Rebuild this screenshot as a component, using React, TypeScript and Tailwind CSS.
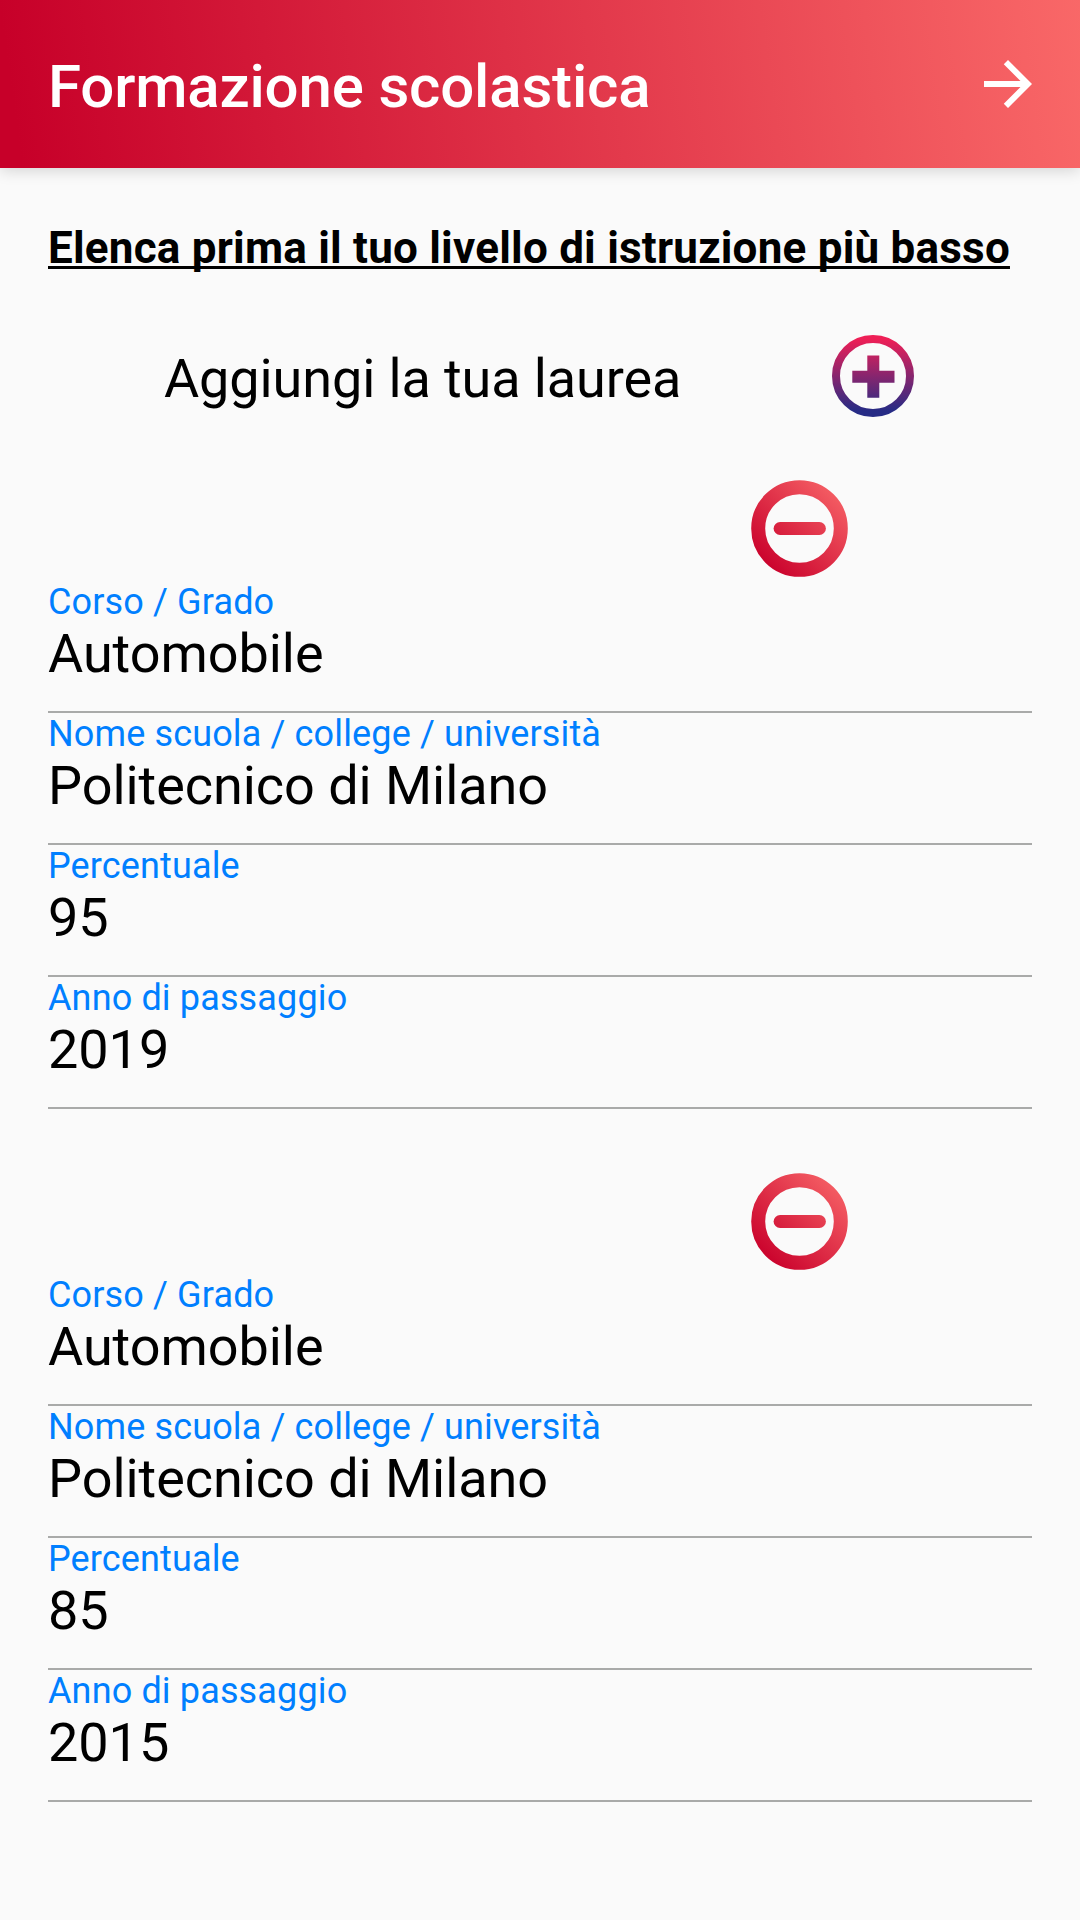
type Entry = { course: string; school: string; percentage: string; year: string };

const entries: Entry[] = [
  { course: "Automobile", school: "Politecnico di Milano", percentage: "95", year: "2019" },
  { course: "Automobile", school: "Politecnico di Milano", percentage: "85", year: "2015" },
];

function ArrowIcon() {
  return (
    <svg viewBox="4 4 16 16" className="size-12 fill-white">
      <path d="M12 4l-1.41 1.41L16.17 11H4v2h12.17l-5.58 5.59L12 20l8-8z" />
    </svg>
  );
}

function PlusIcon() {
  return (
    <svg viewBox="0 0 82 82" className="size-[82px]">
      <defs>
        <linearGradient id="plus" gradientUnits="userSpaceOnUse" x1="0" y1="4" x2="0" y2="76">
          <stop offset="0" stopColor="#ee1f56" />
          <stop offset="1" stopColor="#262b85" />
        </linearGradient>
      </defs>
      <circle cx="41" cy="41" r="37" fill="none" stroke="url(#plus)" strokeWidth="8" />
      <path d="M35.3 20.5h12v15.2h15.2v12h-15.2v15h-12v-15h-15v-12h15z" fill="url(#plus)" />
    </svg>
  );
}

function MinusIcon() {
  return (
    <svg viewBox="0 0 97 97" className="size-[97px]">
      <defs>
        <linearGradient id="minus" gradientUnits="userSpaceOnUse" x1="14" y1="88" x2="92" y2="7">
          <stop offset="0" stopColor="#c9002b" />
          <stop offset="1" stopColor="#f86568" />
        </linearGradient>
      </defs>
      <circle cx="48.5" cy="48.5" r="41.3" fill="none" stroke="url(#minus)" strokeWidth="14" />
      <rect x="22.6" y="42" width="52.3" height="13" rx="6.5" fill="url(#minus)" />
    </svg>
  );
}

function Field({ label, value }: { label: string; value: string }) {
  return (
    <div className="h-[132px] border-b-2 border-[#a9aaa9]">
      <div className="text-[36px] leading-[42px] tracking-[0.14px] text-[#007fff]">{label}</div>
      <div className="text-[54px] leading-[62px] tracking-[-0.05px]">{value}</div>
    </div>
  );
}

export default function App() {
  return (
    <div className="min-h-[1920px] bg-[#fafafa] font-['Roboto',sans-serif] text-black">
      <header className="flex h-[168px] items-center justify-between bg-[linear-gradient(82deg,#c70029_2%,#fa6a69_102%)] px-12 shadow-[0_3px_14px_rgba(0,0,0,0.15)]">
        <h1 className="pt-1.5 text-[60px] leading-[70px] font-medium tracking-[-0.17px] text-white">Formazione scolastica</h1>
        <ArrowIcon />
      </header>
      <main className="px-12 pt-[54px]">
        <p className="text-[44px] leading-[52px] font-bold tracking-[0.22px] whitespace-nowrap underline decoration-[3px] underline-offset-[3px] [text-decoration-skip-ink:none]">
          Elenca prima il tuo livello di istruzione più basso
        </p>
        <div className="mt-[61px] flex h-[82px] items-center pl-[116px]">
          <span className="w-[668px] pt-1.5 text-[54px] leading-[64px] tracking-[-0.11px]">Aggiungi la tua laurea</span>
          <PlusIcon />
        </div>
        <div className="flex flex-col gap-16 pt-[63px]">
          {entries.map((e, i) => (
            <section key={i}>
              <div className="flex h-[101px] pl-[703px]">
                <MinusIcon />
              </div>
              <Field label="Corso / Grado" value={e.course} />
              <Field label="Nome scuola / college / università" value={e.school} />
              <Field label="Percentuale" value={e.percentage} />
              <Field label="Anno di passaggio" value={e.year} />
            </section>
          ))}
        </div>
      </main>
    </div>
  );
}
